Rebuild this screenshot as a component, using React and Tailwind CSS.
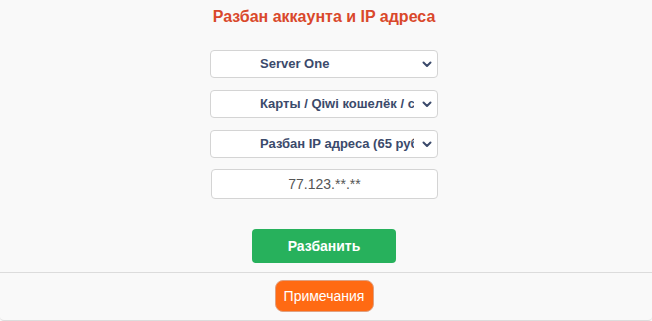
import React from 'react';

const Chevron = () => (
  <svg width="10" height="7" viewBox="0 0 10 7" className="shrink-0">
    <path d="M1.5 1.5 L5 5 L8.5 1.5" fill="none" stroke="#3b4a6b" strokeWidth="2" strokeLinecap="round" strokeLinejoin="round" />
  </svg>
);

function FakeSelect({ label }) {
  return (
    <div className="flex h-[28px] w-[228px] items-center gap-[8px] rounded-[4px] border border-[#d4d4d4] bg-white pl-[49px] pr-[5px]">
      <span className="flex-1 overflow-hidden whitespace-nowrap text-[13px] font-bold text-[#3b4a6b]">{label}</span>
      <Chevron />
    </div>
  );
}

export default function App() {
  return (
    <div className="h-[321px] w-[652px] bg-[#f9f9f9] font-['Liberation_Sans',Arial,sans-serif]">
      <div className="flex flex-col items-center pr-[4px]">
        <h1 className="mt-[7px] text-[16px] font-bold leading-[20px] text-[#d9482b]">Разбан аккаунта и IP адреса</h1>

        <div className="mt-[23px] flex flex-col items-center gap-[12px]">
          <FakeSelect label="Server One" />
          <FakeSelect label="Карты / Qiwi кошелёк / сбп" />
          <FakeSelect label="Разбан IP адреса (65 руб.)" />
        </div>

        <div className="mt-[11px] ml-[1px] flex h-[30px] w-[227px] items-center justify-center rounded-[4px] border border-[#d4d4d4] bg-white text-[14px] text-[#555]">
          77.123.**.**
        </div>

        <button className="mt-[30px] h-[34px] w-[144px] rounded-[4px] bg-[#27b15c] text-[14px] font-bold text-white">
          Разбанить
        </button>
      </div>

      <div className="mt-[9px] flex h-[49px] justify-center rounded-b-[4px] border-t border-b border-[#dcdcdc] pt-[7px] pr-[4px]">
        <button className="h-[32px] w-[99px] rounded-[8px] border border-[#e0a080] bg-[#ff6a13] text-[14px] text-white">
          Примечания
        </button>
      </div>
    </div>
  );
}
